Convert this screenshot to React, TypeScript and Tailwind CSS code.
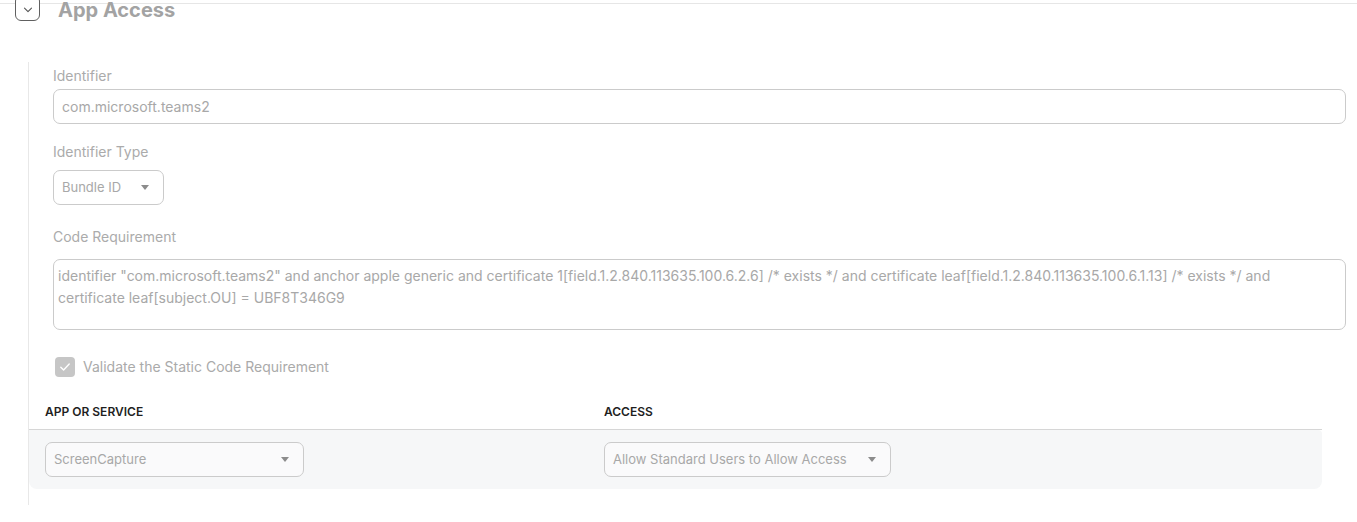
import type { ReactNode } from 'react';

const codeRequirement =
  'identifier "com.microsoft.teams2" and anchor apple generic and certificate 1[field.1.2.840.113635.100.6.2.6] /* exists */ and certificate leaf[field.1.2.840.113635.100.6.1.13] /* exists */ and certificate leaf[subject.OU] = UBF8T346G9';

export default function App() {
  return (
    <div className="w-[1357px] h-[522px] overflow-hidden bg-white font-['Inter','Noto_Sans',sans-serif]">
      <div className="h-[3px]" />
      <div className="border-t border-[#e6e6e6]" />

      <div className="flex items-start gap-[18px] pl-[15px] -mt-[9px]">
        <button
          type="button"
          className="flex h-[26px] w-[25px] items-center justify-center rounded-[6px] border border-[#606060] bg-white"
        >
          <svg width="10" height="6" viewBox="0 0 10 6" fill="none" className="mt-[4px]">
            <path d="M1.5 1.2 5 4.6 8.5 1.2" stroke="#555" strokeWidth="1.1" strokeLinecap="round" strokeLinejoin="round" />
          </svg>
        </button>
        <h2 className="mt-[1px] text-[20px] leading-[28px] font-bold text-[#a3a3a3]">App Access</h2>
      </div>

      <section className="ml-[28px] mt-[38px] border-l border-[#e8e8e8] pt-[4px] pb-[16px]">
        <div className="pl-[24px] pr-[11px]">
          <Label className="mb-[3px]">Identifier</Label>
          <div className="flex h-[35px] items-center rounded-[7px] border border-[#cbcbcb] px-[8px] text-[14px] text-[#a8a8a8]">
            com.microsoft.teams2
          </div>

          <Label className="mt-[18px] mb-[8px]">Identifier Type</Label>
          <Select value="Bundle ID" className="w-[111px]" />

          <Label className="mt-[22px] mb-[12px]">Code Requirement</Label>
          <div className="h-[71px] rounded-[7px] border border-[#cbcbcb] pl-[4px] pr-[24px] pt-[5px] text-[14px] leading-[22px] text-[#a8a8a8]">
            {codeRequirement}
          </div>

          <label className="mt-[27px] flex items-center gap-[8px]">
            <span className="ml-[2px] flex h-[20px] w-[20px] items-center justify-center rounded-[4px] bg-[#c6c6c6]">
              <svg width="12" height="10" viewBox="0 0 12 10" fill="none">
                <path d="M1.8 5.2 4.6 8 10.2 2" stroke="#fff" strokeWidth="1.4" strokeLinecap="round" strokeLinejoin="round" />
              </svg>
            </span>
            <span className="text-[14px] leading-[20px] text-[#aaaaaa]">Validate the Static Code Requirement</span>
          </label>
        </div>

        <div className="mt-[27px] mr-[35px]">
          <div className="flex border-b border-[#d6d6d6] pb-[9px] text-[12px] leading-[16px] font-semibold text-[#1f1f1f]">
            <div className="w-[575px] pl-[16px]">APP OR SERVICE</div>
            <div>ACCESS</div>
          </div>
          <div className="flex rounded-b-[8px] rounded-tr-[4px] bg-[#f6f7f8] py-[12px]">
            <div className="w-[575px] pl-[16px]">
              <Select value="ScreenCapture" className="w-[259px] bg-[#fafafb]" />
            </div>
            <div>
              <Select value="Allow Standard Users to Allow Access" className="w-[287px] bg-[#fafafb]" />
            </div>
          </div>
        </div>
      </section>
    </div>
  );
}

function Label({ children, className = '' }: { children: ReactNode; className?: string }) {
  return <div className={`text-[14px] leading-[20px] text-[#ababab] ${className}`}>{children}</div>;
}

function Select({ value, className = '' }: { value: string; className?: string }) {
  return (
    <div
      className={`flex h-[35px] items-center justify-between rounded-[7px] border border-[#cbcbcb] pl-[8px] pr-[14px] text-[13px] text-[#a8a8a8] ${className}`}
    >
      <span>{value}</span>
      <svg width="8" height="5" viewBox="0 0 8 5">
        <path d="M0 0h8L4 5z" fill="#8c8c8c" />
      </svg>
    </div>
  );
}
